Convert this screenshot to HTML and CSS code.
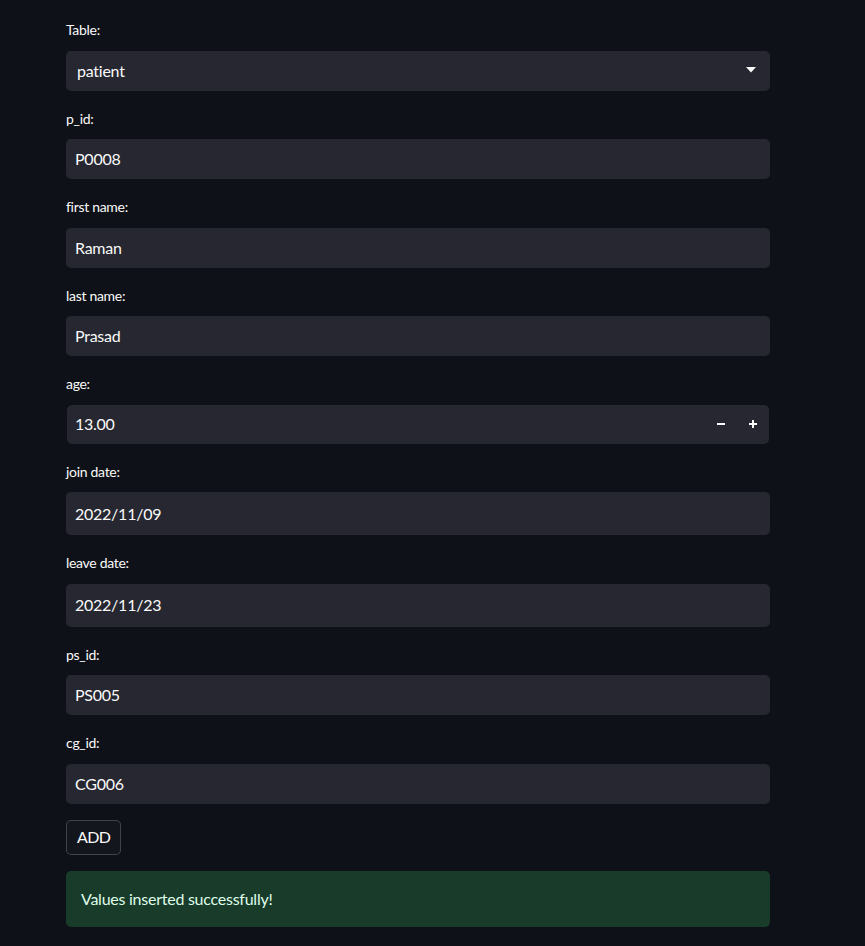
FILE: index.html
```html
<!DOCTYPE html>
<html>
<head>
<meta charset="utf-8">
<link rel="stylesheet" href="styles.css">
</head>
<body>
<main class="form">
  <div class="field">
    <label class="label">Table:</label>
    <div class="box select">
      <span class="value">patient</span>
      <svg class="caret" width="10" height="6" viewBox="0 0 10 6"><path d="M0 0 H10 L5 5.5 Z" fill="#fafafa"/></svg>
    </div>
  </div>
  <div class="field">
    <label class="label">p_id:</label>
    <div class="box"><span class="value">P0008</span></div>
  </div>
  <div class="field">
    <label class="label">first name:</label>
    <div class="box"><span class="value">Raman</span></div>
  </div>
  <div class="field">
    <label class="label">last name:</label>
    <div class="box"><span class="value">Prasad</span></div>
  </div>
  <div class="field">
    <label class="label">age:</label>
    <div class="box number">
      <span class="value">13.00</span>
      <div class="steps">
        <span class="step"><svg width="10" height="10" viewBox="0 0 10 10"><rect x="1" y="4" width="8" height="2" fill="#fafafa"/></svg></span>
        <span class="step"><svg width="10" height="10" viewBox="0 0 10 10"><rect x="1" y="4" width="8" height="2" fill="#fafafa"/><rect x="4" y="1" width="2" height="8" fill="#fafafa"/></svg></span>
      </div>
    </div>
  </div>
  <div class="field">
    <label class="label">join date:</label>
    <div class="box date"><span class="value">2022/11/09</span></div>
  </div>
  <div class="field">
    <label class="label">leave date:</label>
    <div class="box date"><span class="value">2022/11/23</span></div>
  </div>
  <div class="field">
    <label class="label">ps_id:</label>
    <div class="box"><span class="value">PS005</span></div>
  </div>
  <div class="field">
    <label class="label">cg_id:</label>
    <div class="box"><span class="value">CG006</span></div>
  </div>
  <div class="field">
    <button class="btn">ADD</button>
  </div>
  <div class="field">
    <div class="alert">Values inserted successfully!</div>
  </div>
</main>
</body>
</html>
```
FILE: styles.css
```css
html, body {
  margin: 0;
  padding: 0;
  background: #0e1117;
  color: #fafafa;
  font-family: Lato, "Noto Sans", sans-serif;
}
.form {
  width: 704px;
  margin-left: 66px;
  padding-top: 18.4px;
  display: flex;
  flex-direction: column;
  gap: 16px;
}
.field {
  display: flex;
  flex-direction: column;
}
.label {
  display: block;
  font-size: 14px;
  line-height: 24px;
  height: 24px;
  margin-bottom: 8.5px;
  color: #fafafa;
  letter-spacing: -0.3px;
}
.box {
  height: 40px;
  background: #262730;
  border-radius: 5px;
  display: flex;
  align-items: center;
  padding: 0 9px 1px;
  font-size: 16px;
  letter-spacing: -0.25px;
  box-sizing: border-box;
}
.box .value {
  flex: 1;
}
.select {
  padding-left: 11px;
  padding-right: 14px;
}
.number {
  margin: 0 1px;
  padding-right: 0;
  height: 39px;
  padding-left: 8px;
}
.steps {
  display: flex;
  height: 100%;
}
.step {
  width: 32px;
  display: flex;
  align-items: center;
  justify-content: center;
}
.date {
  height: 43px;
}
.btn {
  align-self: flex-start;
  height: 35px;
  padding: 0 10px 1px;
  background: #13161d;
  border: 1px solid rgba(250, 250, 250, 0.2);
  border-radius: 5px;
  color: #fafafa;
  font-family: inherit;
  font-size: 16px;
  letter-spacing: -0.6px;
}
.alert {
  height: 56px;
  box-sizing: border-box;
  background: #193b2a;
  border-radius: 5px;
  color: #dffde9;
  font-size: 16px;
  letter-spacing: -0.25px;
  display: flex;
  align-items: center;
  padding: 0 15px 1px;
}
```
